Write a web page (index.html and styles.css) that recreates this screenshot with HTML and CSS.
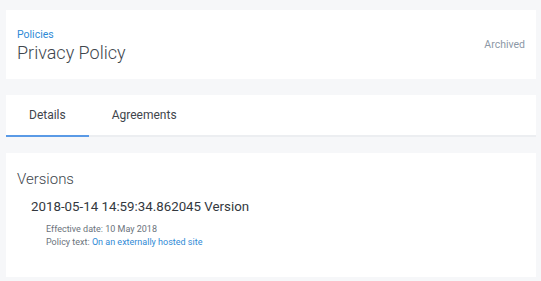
FILE: index.html
```html
<!DOCTYPE html>
<html lang="en">
<head>
  <meta charset="UTF-8">
  <meta name="viewport" content="width=device-width, initial-scale=1.0">
  <title>Privacy Policy</title>
  <link rel="stylesheet" href="styles.css">
</head>
<body>
  <div class="page">
    <div class="card header">
      <div class="title-block">
        <a class="crumb" href="#">Policies</a>
        <h1>Privacy Policy</h1>
      </div>
      <div class="status">Archived</div>
    </div>

    <div class="card tabs">
      <div class="tab active">Details</div>
      <div class="tab">Agreements</div>
    </div>

    <div class="card versions">
      <h2>Versions</h2>
      <div class="version">
        <h3>2018-05-14 14:59:34.862045 Version</h3>
        <div class="meta">Effective date: 10 May 2018</div>
        <div class="meta">Policy text: <a href="#">On an externally hosted site</a></div>
      </div>
    </div>
  </div>
</body>
</html>
```

FILE: styles.css
```css
body {
  margin: 0;
  font-family: Roboto, 'Liberation Sans', sans-serif;
  background: #f6f7f9;
  color: #3f454c;
}
.page {
  padding: 10px 5px 4px 6px;
  display: flex;
  flex-direction: column;
  gap: 16px;
}
.card {
  background: #fff;
}
a {
  color: #2f8ad6;
  text-decoration: none;
}
.header {
  height: 69px;
  box-sizing: border-box;
  padding: 18px 11px 0;
  display: flex;
  justify-content: space-between;
}
.crumb {
  display: block;
  font-size: 10.5px;
  line-height: 14px;
}
h1 {
  margin: 0;
  font-size: 18px;
  font-weight: 300;
  line-height: 22px;
  color: #40464d;
}
.status {
  align-self: center;
  margin-top: -18px;
  font-size: 10.5px;
  color: #8c98a6;
}
.tabs {
  display: flex;
  height: 42px;
  box-sizing: border-box;
  border-bottom: 2px solid #eceef1;
}
.tab {
  font-size: 12px;
  color: #3f454c;
  padding: 0 23px;
  line-height: 41px;
  margin-bottom: -2px;
  border-bottom: 2px solid transparent;
}
.tab.active {
  border-bottom-color: #5a9ae6;
}
.versions {
  height: 124px;
  box-sizing: border-box;
  padding: 16px 11px;
}
h2 {
  margin: 0;
  font-size: 15px;
  font-weight: 300;
  line-height: 20px;
  color: #40464d;
}
.version {
  padding: 8px 0 0 14px;
}
h3 {
  margin: 0 0 6px;
  font-size: 13.3px;
  font-weight: 400;
  line-height: 20px;
  color: #33383e;
}
.meta {
  padding-left: 15px;
  font-size: 9px;
  line-height: 13px;
  color: #6b737c;
}
```
